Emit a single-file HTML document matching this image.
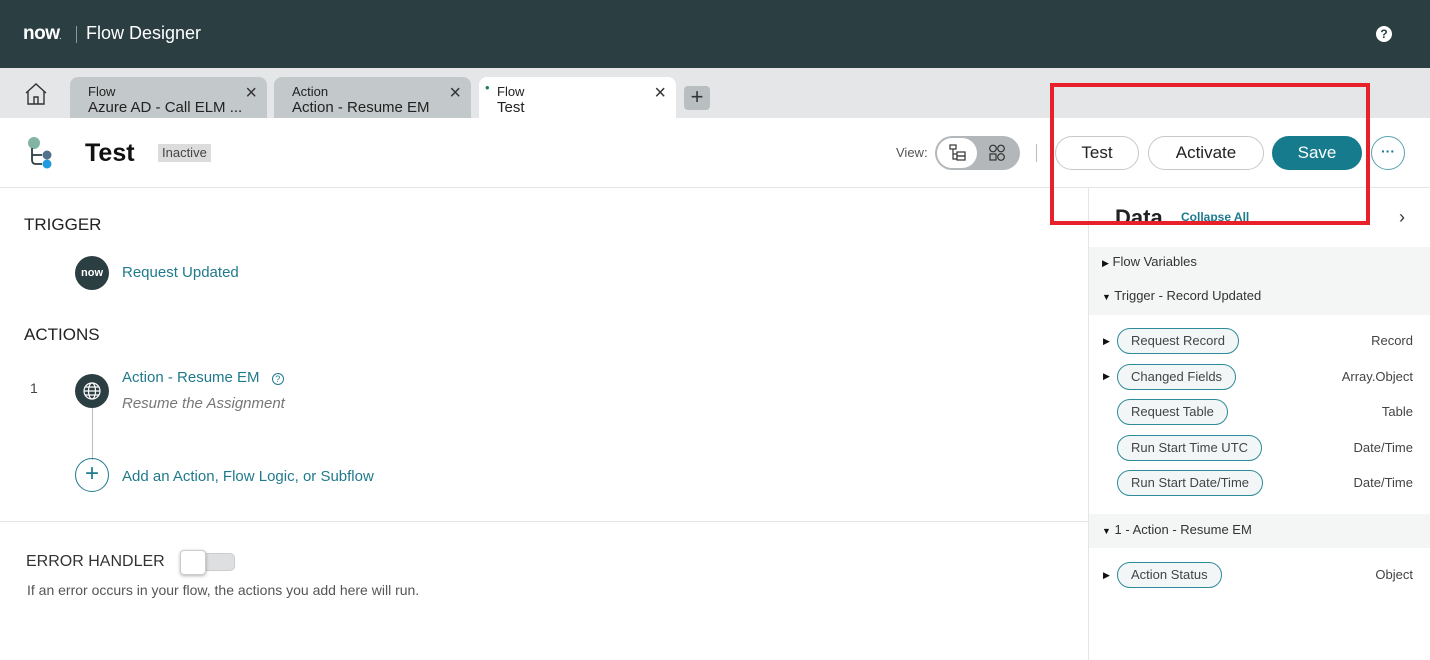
<!DOCTYPE html>
<html><head><style>
*{box-sizing:border-box;margin:0;padding:0}
body{width:1430px;height:660px;overflow:hidden;font-family:"Liberation Sans",sans-serif;background:#fff;position:relative;color:#222}
.a{position:absolute}
.hdr{left:0;top:0;width:1430px;height:68px;background:#2b3e42}
.tabs{left:0;top:68px;width:1430px;height:50px;background:#e4e6e7}
.tab{top:77px;height:41px;width:197px;border-radius:8px 8px 0 0;background:#c3c8ca;font-size:13px;line-height:16px;padding:7px 0 0 18px;color:#222}
.tab .x{position:absolute;right:10px;top:8px;font-size:20px;color:#333}
.btn{top:136px;height:34px;border:1px solid #c8c8c8;border-radius:17px;font-size:17px;text-align:center;line-height:32px;color:#222}
.pill{left:1117px;height:26px;border:1px solid #2e8b99;border-radius:13px;background:#f2f6f7;font-size:13px;line-height:24px;padding:0 13px;color:#444}
.typ{right:17px;font-size:13px;color:#444}
.tri{font-size:9px;color:#111}
.teal{color:#1f7a8c}
</style></head><body>
<div class="a hdr"></div>
<div class="a" style="left:23px;top:23px;color:#fff;font-size:19px;font-weight:bold;letter-spacing:-0.5px">now<span style="font-size:6px">.</span></div>
<div class="a" style="left:76px;top:26px;width:1px;height:17px;background:#8a9a9c"></div>
<div class="a" style="left:86px;top:23px;color:#fff;font-size:18px">Flow Designer</div>
<div class="a" style="left:1376px;top:26px;width:16px;height:16px;border-radius:50%;background:#fff;color:#2b3e42;font-size:12px;font-weight:bold;text-align:center;line-height:16px">?</div>

<div class="a tabs"></div>
<svg class="a" style="left:24px;top:82px" width="24" height="24" viewBox="0 0 24 24" fill="none" stroke="#333" stroke-width="1.4"><path d="M2 11L12 2l10 9M4 9v13h16V9M10 22v-7h4v7"/></svg>
<div class="a tab" style="left:70px">Flow<br><span style="font-size:15px">Azure AD - Call ELM ...</span><span class="x">×</span></div>
<div class="a tab" style="left:274px">Action<br><span style="font-size:15px">Action - Resume EM</span><span class="x">×</span></div>
<div class="a tab" style="left:479px;background:#fff"><span style="color:#1f7a6c;position:absolute;left:6px;top:3px">•</span>Flow<br><span style="font-size:15px">Test</span><span class="x">×</span></div>
<div class="a" style="left:684px;top:86px;width:26px;height:24px;border-radius:4px;background:#b9bfc1;text-align:center;font-size:22px;line-height:22px;color:#333">+</div>

<svg class="a" style="left:26px;top:136px" width="30" height="34" viewBox="0 0 30 34"><circle cx="8" cy="7" r="6" fill="#81b5a1"/><path d="M6 12v12q0 4 4 4h6M6 19h10" fill="none" stroke="#2b3e42" stroke-width="1.8"/><circle cx="21" cy="19" r="4.5" fill="#52718a"/><circle cx="21" cy="28" r="4.5" fill="#1f9adc"/></svg>
<div class="a" style="left:85px;top:139px;font-size:25px;font-weight:bold;color:#111">Test</div>
<div class="a" style="left:158px;top:144px;height:18px;padding:0 4px;background:#dcdcdc;color:#444;font-size:13px;line-height:18px">Inactive</div>

<div class="a" style="left:896px;top:145px;font-size:13px;color:#555">View:</div>
<div class="a" style="left:935px;top:136px;width:85px;height:34px;border-radius:17px;background:#b3b7b9"></div>
<div class="a" style="left:937px;top:138px;width:40px;height:30px;border-radius:15px;background:#fff"></div>
<svg class="a" style="left:949px;top:144px" width="18" height="18" viewBox="0 0 18 18" fill="none" stroke="#333" stroke-width="1.2"><rect x="1" y="1" width="6" height="4"/><path d="M4 5v10h4M4 10h4"/><rect x="8" y="8" width="8" height="4"/><rect x="8" y="12" width="8" height="4"/></svg>
<svg class="a" style="left:988px;top:144px" width="18" height="18" viewBox="0 0 18 18" fill="none" stroke="#333" stroke-width="1.2"><circle cx="5" cy="4.5" r="3.3"/><circle cx="13" cy="4.5" r="3.3"/><rect x="2" y="10" width="6" height="6"/><circle cx="13" cy="13" r="3.3"/></svg>
<div class="a" style="left:1036px;top:144px;width:1px;height:18px;background:#bbb"></div>
<div class="a btn" style="left:1055px;width:84px">Test</div>
<div class="a btn" style="left:1148px;width:116px">Activate</div>
<div class="a btn" style="left:1272px;width:90px;background:#157b8d;border-color:#157b8d;color:#fff">Save</div>
<div class="a" style="left:1371px;top:136px;width:34px;height:34px;border-radius:50%;border:1px solid #5aa3b0;text-align:center;font-size:14px;font-weight:bold;line-height:28px;color:#157b8d">···</div>
<div class="a" style="left:0;top:187px;width:1430px;height:1px;background:#e5e5e5"></div>

<div class="a" style="left:24px;top:215px;font-size:17px;color:#222">TRIGGER</div>
<div class="a" style="left:75px;top:256px;width:34px;height:34px;border-radius:50%;background:#2b3e42;color:#fff;font-size:11px;font-weight:bold;text-align:center;line-height:34px">now</div>
<div class="a teal" style="left:122px;top:264px;font-size:15px">Request Updated</div>
<div class="a" style="left:24px;top:325px;font-size:17px;color:#222">ACTIONS</div>
<div class="a" style="left:30px;top:380px;font-size:14px;color:#444">1</div>
<div class="a" style="left:92px;top:400px;width:1px;height:60px;background:#bbb"></div>
<div class="a" style="left:75px;top:374px;width:34px;height:34px;border-radius:50%;background:#2b3e42"></div>
<svg class="a" style="left:82px;top:381px" width="20" height="20" viewBox="0 0 20 20" fill="none" stroke="#fff" stroke-width="1.2"><circle cx="10" cy="10" r="8"/><ellipse cx="10" cy="10" rx="3.5" ry="8"/><path d="M2 10h16M3.5 6h13M3.5 14h13"/></svg>
<div class="a teal" style="left:122px;top:369px;font-size:15px">Action - Resume EM <span style="display:inline-block;width:12px;height:12px;border:1.2px solid #1f7a8c;border-radius:50%;text-align:center;line-height:10px;margin-left:8px;font-size:9px">?</span></div>
<div class="a" style="left:122px;top:395px;font-size:15px;font-style:italic;color:#777">Resume the Assignment</div>
<div class="a" style="left:75px;top:458px;width:34px;height:34px;border-radius:50%;border:1px solid #1f7a8c;color:#1f7a8c;text-align:center;font-size:24px;line-height:30px">+</div>
<div class="a teal" style="left:122px;top:468px;font-size:15px">Add an Action, Flow Logic, or Subflow</div>
<div class="a" style="left:0;top:521px;width:1088px;height:1px;background:#e5e5e5"></div>
<div class="a" style="left:26px;top:553px;font-size:16px;color:#333">ERROR HANDLER</div>
<div class="a" style="left:180px;top:553px;width:55px;height:18px;border-radius:5px;background:#dedfe0;border:1px solid #ccc"></div>
<div class="a" style="left:180px;top:550px;width:26px;height:25px;border-radius:4px;background:#fff;border:1px solid #ccc;box-shadow:0 1px 3px rgba(0,0,0,.3)"></div>
<div class="a" style="left:27px;top:582px;font-size:14px;color:#555">If an error occurs in your flow, the actions you add here will run.</div>

<div class="a" style="left:1088px;top:188px;width:1px;height:472px;background:#e5e5e5"></div>
<div class="a" style="left:1115px;top:205px;font-size:22px;font-weight:bold;color:#222">Data</div>
<div class="a teal" style="left:1181px;top:210px;font-size:12px;font-weight:bold">Collapse All</div>
<div class="a" style="left:1399px;top:207px;font-size:18px;color:#333">›</div>
<div class="a" style="left:1089px;top:247px;width:341px;height:68px;background:#f4f5f5"></div>
<div class="a" style="left:1102px;top:254px;font-size:13px;color:#333"><span class="tri">▶</span> Flow Variables</div>
<div class="a" style="left:1102px;top:288px;font-size:13px;color:#333"><span class="tri">▼</span> Trigger - Record Updated</div>
<div class="a tri" style="left:1103px;top:336px">▶</div>
<div class="a pill" style="top:328px">Request Record</div><div class="a typ" style="top:333px">Record</div>
<div class="a tri" style="left:1103px;top:371px">▶</div>
<div class="a pill" style="top:364px">Changed Fields</div><div class="a typ" style="top:369px">Array.Object</div>
<div class="a pill" style="top:399px">Request Table</div><div class="a typ" style="top:404px">Table</div>
<div class="a pill" style="top:435px">Run Start Time UTC</div><div class="a typ" style="top:440px">Date/Time</div>
<div class="a pill" style="top:470px">Run Start Date/Time</div><div class="a typ" style="top:475px">Date/Time</div>
<div class="a" style="left:1089px;top:514px;width:341px;height:34px;background:#f4f5f5"></div>
<div class="a" style="left:1102px;top:522px;font-size:13px;color:#333"><span class="tri">▼</span> 1 - Action - Resume EM</div>
<div class="a tri" style="left:1103px;top:570px">▶</div>
<div class="a pill" style="top:562px">Action Status</div><div class="a typ" style="top:567px">Object</div>

<div class="a" style="left:1050px;top:83px;width:320px;height:142px;border:4px solid #e8202a"></div>
</body></html>
